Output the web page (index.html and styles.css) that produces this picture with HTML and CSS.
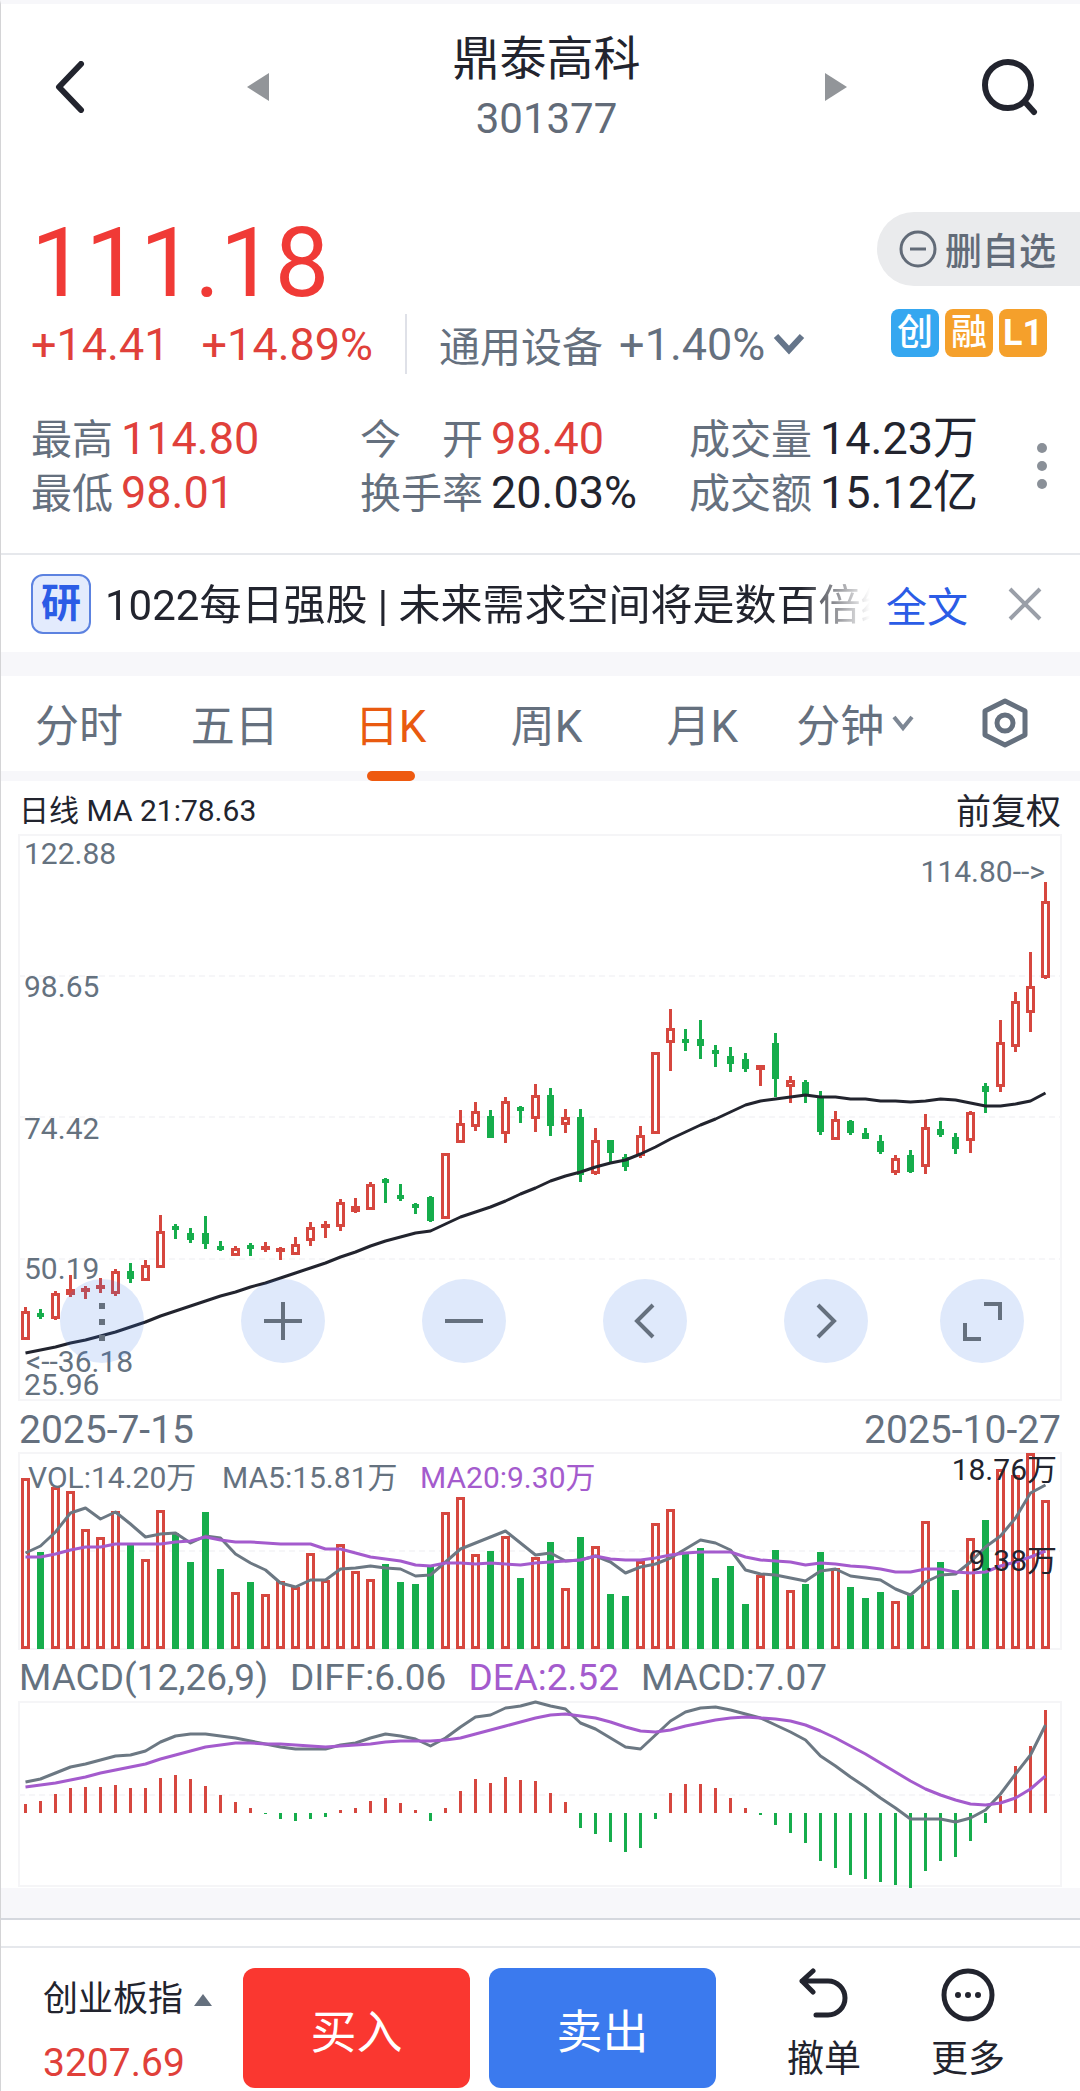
FILE: index.html
```html
<!DOCTYPE html>
<html lang="zh-CN">
<head>
    <meta charset="UTF-8">
    <meta name="viewport" content="width=device-width, initial-scale=1.0">
    <title>鼎泰高科 301377</title>
    <link rel="stylesheet" href="styles.css">
</head>
<body>
<div class="page">
    <header class="topbar">
        <button class="icon-btn back" aria-label="返回">
            <svg width="30" height="52" viewBox="0 0 30 52"><path d="M26 3L4 26L26 49" fill="none" stroke="#22242e" stroke-width="6" stroke-linecap="round" stroke-linejoin="round"/></svg>
        </button>
        <div class="switcher">
            <button class="icon-btn" aria-label="上一只">
                <svg width="22" height="28" viewBox="0 0 22 28"><path d="M22 0V28L0 14Z" fill="#929599"/></svg>
            </button>
            <div class="stock">
                <h1>鼎泰高科</h1>
                <span>301377</span>
            </div>
            <button class="icon-btn" aria-label="下一只">
                <svg width="22" height="28" viewBox="0 0 22 28"><path d="M0 0V28L22 14Z" fill="#929599"/></svg>
            </button>
        </div>
        <button class="icon-btn search" aria-label="搜索">
            <svg width="56" height="58" viewBox="0 0 56 58" fill="none" stroke="#22242e" stroke-width="6" stroke-linecap="round"><circle cx="26" cy="27" r="23"/><path d="M43 44L52 54"/></svg>
        </button>
    </header>

    <section class="quote">
        <div class="quote-main">
            <div class="price">111.18</div>
            <div class="change">
                <span>+14.41</span>
                <span>+14.89%</span>
                <button class="sector">
                    <span class="sector-name">通用设备</span>
                    <span>+1.40%</span>
                    <svg width="32" height="24" viewBox="0 0 32 24"><path d="M3 4L16 18L29 4" fill="none" stroke="#65758a" stroke-width="6"/></svg>
                </button>
            </div>
        </div>
        <div class="quote-side">
            <button class="unfollow">
                <svg width="38" height="38" viewBox="0 0 38 38" fill="none" stroke="#626b78" stroke-width="3"><circle cx="19" cy="19" r="17"/><path d="M11 19H27"/></svg>
                删自选
            </button>
            <div class="tags">
                <span class="tag tag-blue">创</span>
                <span class="tag">融</span>
                <span class="tag tag-level">L1</span>
            </div>
        </div>
    </section>

    <section class="stats">
        <dl>
            <div><dt>最高</dt><dd class="up">114.80</dd></div>
            <div><dt>今　开</dt><dd class="up">98.40</dd></div>
            <div><dt>成交量</dt><dd>14.23万</dd></div>
            <div><dt>最低</dt><dd class="up">98.01</dd></div>
            <div><dt>换手率</dt><dd>20.03%</dd></div>
            <div><dt>成交额</dt><dd>15.12亿</dd></div>
        </dl>
        <button class="icon-btn more-stats" aria-label="更多指标">
            <svg width="10" height="46" viewBox="0 0 10 46" fill="#8a9098"><circle cx="5" cy="5" r="5"/><circle cx="5" cy="23" r="5"/><circle cx="5" cy="41" r="5"/></svg>
        </button>
    </section>

    <section class="news">
        <span class="news-badge">研</span>
        <p class="news-text">1022每日强股 | 未来需求空间将是数百倍级</p>
        <a class="news-link" href="#">全文</a>
        <button class="icon-btn close" aria-label="关闭">
            <svg width="34" height="34" viewBox="0 0 34 34"><path d="M2 2L32 32M32 2L2 32" stroke="#9a9fa8" stroke-width="4"/></svg>
        </button>
    </section>

    <nav class="tabs">
        <button>分时</button>
        <button>五日</button>
        <button class="active">日K</button>
        <button>周K</button>
        <button>月K</button>
        <button>分钟
            <svg width="22" height="18" viewBox="0 0 22 18"><path d="M2 3L11 14L20 3" fill="none" stroke="#7d8794" stroke-width="4"/></svg>
        </button>
        <button aria-label="设置">
            <svg width="48" height="50" viewBox="0 0 48 50" fill="none" stroke="#65707e" stroke-width="5" stroke-linejoin="round"><path d="M24 3L44 13V37L24 47L4 37V13Z"/><circle cx="24" cy="25" r="8"/></svg>
        </button>
    </nav>

    <main class="charts">
        <div class="chart-info">
            <span>日线 MA 21:78.63</span>
            <button>前复权</button>
        </div>

        <div class="kline">
            <svg id="kline" class="chart" viewBox="0 0 1042 565">
                <rect class="frame" width="1042" height="565"/>
                <path class="grid" d="M0 141H1042M0 282H1042M0 424H1042"/>
                <g class="plot"></g>
                <text class="axis" x="5" y="29">122.88</text>
                <text class="axis" x="5" y="162">98.65</text>
                <text class="axis" x="5" y="304">74.42</text>
                <text class="axis" x="5" y="444">50.19</text>
                <text class="axis" x="5" y="560">25.96</text>
                <text class="axis" x="7" y="537">&lt;--36.18</text>
                <text class="axis end" x="1026" y="47">114.80--&gt;</text>
            </svg>
            <div class="tools">
                <button aria-label="菜单"><svg viewBox="0 0 84 84"><path d="M42 24V62" stroke-width="6" stroke-dasharray="6 10"/></svg></button>
                <button aria-label="放大"><svg viewBox="0 0 84 84"><path d="M42 23V61M23 42H61"/></svg></button>
                <button aria-label="缩小"><svg viewBox="0 0 84 84"><path d="M23 42H61"/></svg></button>
                <button aria-label="左移"><svg viewBox="0 0 84 84"><path d="M50 26L34 42L50 58"/></svg></button>
                <button aria-label="右移"><svg viewBox="0 0 84 84"><path d="M34 26L50 42L34 58"/></svg></button>
                <button class="expand" aria-label="全屏"><svg viewBox="0 0 84 84"><path d="M44 25H60V41M25 44V60H41"/></svg></button>
            </div>
        </div>

        <div class="dates">
            <span>2025-7-15</span>
            <span>2025-10-27</span>
        </div>

        <svg id="volume" class="chart" viewBox="0 0 1042 196">
            <rect class="frame" width="1042" height="196"/>
            <path class="grid" d="M0 98H1042"/>
            <g class="plot"></g>
            <text class="axis" x="9" y="35">VOL:14.20万</text>
            <text class="axis" x="203" y="35">MA5:15.81万</text>
            <text class="axis purple" x="401" y="35">MA20:9.30万</text>
            <text class="axis dark end" x="1038" y="27">18.76万</text>
            <text class="axis dark end" x="1038" y="118">9.38万</text>
        </svg>

        <div class="macd-info">
            <span>MACD(12,26,9)</span>
            <span>DIFF:6.06</span>
            <span class="purple">DEA:2.52</span>
            <span>MACD:7.07</span>
        </div>

        <svg id="macd" class="chart" viewBox="0 0 1042 184">
            <rect class="frame" width="1042" height="184"/>
            <path class="grid" d="M0 93H1042"/>
            <g class="plot"></g>
        </svg>
    </main>

    <div class="band"></div>

    <footer class="bottombar">
        <button class="index">
            <span class="index-name">创业板指
                <svg width="18" height="12" viewBox="0 0 18 12"><path d="M9 0L18 12H0Z" fill="#65707e"/></svg>
            </span>
            <span class="index-value">3207.69</span>
        </button>
        <button class="trade buy">买入</button>
        <button class="trade sell">卖出</button>
        <button class="action">
            <svg width="54" height="54" viewBox="0 0 54 54" fill="none" stroke="#22242e" stroke-width="5" stroke-linecap="round" stroke-linejoin="round"><path d="M16 3L5 13L16 24M5 13H31A17 17 0 0 1 31 47H19"/></svg>
            撤单
        </button>
        <button class="action">
            <svg width="54" height="54" viewBox="0 0 54 54"><circle cx="27" cy="27" r="24" fill="none" stroke="#22242e" stroke-width="5"/><g fill="#22242e"><circle cx="17" cy="27" r="3"/><circle cx="27" cy="27" r="3"/><circle cx="37" cy="27" r="3"/></g></svg>
            更多
        </button>
    </footer>
</div>
<script src="script.js"></script>
</body>
</html>
```

FILE: styles.css
```css
* {
    box-sizing: border-box;
}

body {
    margin: 0;
    background: #fff;
    color: #22242e;
    font-family: Roboto, "Noto Sans CJK SC", sans-serif;
}

button {
    padding: 0;
    border: none;
    background: none;
    color: inherit;
    font: inherit;
    cursor: pointer;
}

svg {
    display: block;
    flex: none;
}

.page {
    border-top: 4px solid #f7f7fa;
    border-left: 1px solid #d4d4d6;
}

.icon-btn {
    display: flex;
    align-items: center;
    justify-content: center;
}

/* Cabeçalho */
.topbar {
    display: flex;
    align-items: center;
    justify-content: space-between;
    height: 146px;
    padding: 20px 42px 0 54px;
}

.back {
    width: 56px;
    justify-content: flex-start;
}

.switcher {
    display: flex;
    flex: 0 1 600px;
    align-items: center;
    justify-content: space-between;
}

.stock {
    display: flex;
    flex-direction: column;
    align-items: center;
    padding-top: 2px;
}

.stock h1 {
    margin: 0;
    font-size: 47px;
    font-weight: 400;
    line-height: 62px;
}

.stock span {
    color: #626b78;
    font-size: 42px;
    line-height: 58px;
}

/* Quote */
.quote {
    display: flex;
    justify-content: space-between;
    padding-top: 62px;
}

.quote-main {
    padding-left: 30px;
}

.price {
    color: #f03a36;
    font-size: 97px;
    line-height: 102px;
}

.change {
    display: flex;
    align-items: center;
    gap: 32px;
    height: 60px;
    color: #e0403a;
    font-size: 45px;
    white-space: nowrap;
}

.sector {
    display: flex;
    align-items: center;
    gap: 8px;
    height: 60px;
    padding-left: 32px;
    border-left: 2px solid #dfe1e8;
    color: #65707e;
}

.sector-name {
    margin-right: 8px;
    font-size: 41px;
}

.quote-side {
    display: flex;
    flex-direction: column;
    align-items: flex-end;
    gap: 23px;
}

.unfollow {
    display: flex;
    align-items: center;
    gap: 8px;
    height: 74px;
    padding: 0 24px 0 22px;
    border-radius: 37px 0 0 37px;
    background: #eaebed;
    color: #626b78;
    font-size: 37px;
    font-weight: 500;
}

.tags {
    display: flex;
    gap: 6px;
    padding-right: 33px;
}

.tag {
    width: 48px;
    height: 48px;
    border-radius: 8px;
    background: #f5a02b;
    color: #fff;
    font-size: 36px;
    font-weight: 500;
    line-height: 48px;
    text-align: center;
}

.tag-blue {
    background: #35a7f0;
}

.tag-level {
    font-weight: 700;
}

/* Stats */
.stats {
    display: flex;
    align-items: center;
    padding: 38px 14px 33px 30px;
    border-bottom: 2px solid #e6e8ec;
}

.stats dl {
    display: grid;
    flex: 1;
    grid-template-columns: repeat(3, 1fr);
    margin: 0;
}

.stats dl div {
    display: flex;
    align-items: baseline;
    gap: 8px;
    height: 54px;
    line-height: 54px;
    white-space: nowrap;
}

.stats dt {
    color: #65707e;
    font-size: 41px;
}

.stats dd {
    margin: 0;
    font-size: 45px;
}

.stats .up {
    color: #e0403a;
}

.more-stats {
    width: 48px;
    height: 60px;
}

/* News */
.news {
    display: flex;
    align-items: center;
    height: 97px;
    padding: 0 38px 0 30px;
}

.news-badge {
    flex: none;
    width: 60px;
    height: 60px;
    border: 2px solid #5c82e0;
    border-radius: 12px;
    background: #e3ebfd;
    color: #2b5ce6;
    font-size: 40px;
    font-weight: 700;
    line-height: 56px;
    text-align: center;
}

.news-text {
    flex: 1;
    min-width: 0;
    margin: 0 16px 0 14px;
    padding-top: 4px;
    overflow: hidden;
    font-size: 42px;
    line-height: 60px;
    white-space: nowrap;
    -webkit-mask-image: linear-gradient(to right, #000 91%, transparent);
    mask-image: linear-gradient(to right, #000 91%, transparent);
}

.news-link {
    color: #2b5ce6;
    font-size: 41px;
    text-decoration: none;
}

.close {
    margin-left: 40px;
}

/* Tabs */
.tabs {
    display: grid;
    grid-template-columns: repeat(5, 26fr) repeat(2, 25fr);
    height: 129px;
    border-top: 24px solid #f7f7fa;
    border-bottom: 10px solid #f7f7fa;
    color: #65707e;
    font-size: 44px;
}

.tabs button {
    position: relative;
    display: flex;
    align-items: center;
    justify-content: center;
    gap: 8px;
    height: 95px;
    padding-bottom: 2px;
}

.tabs .active {
    color: #e95a10;
}

.tabs .active::after {
    content: "";
    position: absolute;
    bottom: -10px;
    width: 48px;
    height: 10px;
    border-radius: 5px;
    background: #ee5a10;
}

/* Charts */
.charts {
    padding: 0 19px 2px 18px;
}

.chart-info {
    display: flex;
    align-items: center;
    justify-content: space-between;
    height: 54px;
    font-size: 30px;
}

.chart-info button {
    font-size: 35px;
}

.chart {
    width: 100%;
    height: auto;
    overflow: visible;
}

.kline {
    position: relative;
}

.tools {
    position: absolute;
    right: 37px;
    bottom: 37px;
    left: 41px;
    display: flex;
}

.tools button {
    flex: none;
    width: 84px;
    height: 84px;
    margin-right: 97px;
    border-radius: 50%;
    background: rgba(55, 120, 230, 0.16);
}

.tools button:nth-last-child(2) {
    margin-right: auto;
}

.tools .expand {
    margin-right: 0;
}

.tools svg {
    fill: none;
    stroke: #65707e;
    stroke-width: 4;
}

.dates {
    display: flex;
    align-items: center;
    justify-content: space-between;
    height: 53px;
    padding-top: 6px;
    color: #65707e;
    font-size: 39px;
}

.macd-info {
    display: flex;
    align-items: center;
    gap: 22px;
    height: 53px;
    padding-top: 4px;
    color: #65727f;
    font-size: 37px;
    white-space: nowrap;
}

.frame {
    fill: none;
    stroke: #f5f5f7;
    stroke-width: 2;
}

.grid {
    stroke: #f6f6f8;
    stroke-width: 2;
    stroke-dasharray: 6 4;
}

.axis {
    fill: #65727f;
    font-size: 30px;
}

.end {
    text-anchor: end;
}

.dark {
    fill: #22242e;
}

.purple {
    color: #a45bcd;
    fill: #a45bcd;
}

.rise {
    fill: #fff;
    stroke: #d6473f;
    stroke-width: 3;
}

.fall {
    fill: #16ad4c;
    stroke: #16ad4c;
    stroke-width: 3;
}

.line {
    fill: none;
    stroke: #22242e;
    stroke-width: 3;
    stroke-linejoin: round;
}

.line-gray {
    stroke: #6c7883;
}

.line-purple {
    stroke: #a45bcd;
}

/* Bottom */
.band {
    height: 60px;
    border-top: 30px solid #f7f7fa;
    border-bottom: 2px solid #e6e8ec;
    box-shadow: inset 0 2px 0 #d5d8de;
}

.bottombar {
    display: flex;
    align-items: flex-start;
    height: 143px;
    padding: 20px 40px 0 42px;
}

.index {
    display: flex;
    flex-direction: column;
    align-items: flex-start;
    width: 200px;
    padding-top: 2px;
    white-space: nowrap;
}

.index-name {
    display: flex;
    align-items: center;
    gap: 11px;
    font-size: 35px;
    line-height: 60px;
}

.index-value {
    color: #e0403a;
    font-size: 39px;
    line-height: 66px;
}

.trade {
    flex: 1;
    height: 120px;
    border-radius: 12px;
    color: #fff;
    font-size: 46px;
}

.buy {
    margin-right: 19px;
    background: #fa3730;
}

.sell {
    background: #3b7aee;
}

.action {
    display: flex;
    flex-direction: column;
    align-items: center;
    gap: 12px;
    width: 144px;
    font-size: 37px;
    line-height: 52px;
}

.sell + .action {
    margin-left: 36px;
}
```

FILE: script.js
```js
const PASSO = 15;
const INICIO = 6.5;

// [cor, máxima, topo do corpo, base do corpo, mínima]
const candles = [
    ['r', 472, 476, 505, 505], ['g', 474, 478, 482, 484], ['r', 456, 458, 484, 485],
    ['r', 440, 454, 460, 462], ['r', 451, 453, 455, 464], ['r', 443, 450, 453, 458],
    ['r', 434, 436, 459, 461], ['g', 428, 436, 444, 448], ['r', 425, 430, 446, 446],
    ['r', 380, 396, 433, 433], ['g', 389, 391, 394, 404], ['g', 393, 398, 405, 408],
    ['g', 381, 398, 409, 414], ['g', 406, 411, 415, 416], ['r', 411, 413, 421, 421],
    ['g', 408, 410, 413, 421], ['r', 407, 411, 414, 417], ['r', 412, 413, 416, 425],
    ['r', 402, 409, 420, 420], ['r', 387, 392, 406, 411], ['r', 386, 389, 393, 403],
    ['r', 364, 367, 392, 396], ['r', 363, 371, 377, 378], ['r', 347, 349, 375, 375],
    ['g', 343, 344, 348, 368], ['g', 349, 360, 364, 366], ['g', 368, 369, 371, 379],
    ['g', 361, 362, 386, 387], ['r', 318, 318, 384, 384], ['r', 275, 288, 308, 308],
    ['r', 267, 276, 292, 296], ['g', 275, 281, 303, 303], ['r', 262, 266, 299, 308],
    ['g', 271, 272, 276, 288], ['r', 249, 260, 284, 297], ['g', 253, 260, 291, 301],
    ['r', 274, 282, 290, 298], ['g', 274, 282, 340, 347], ['r', 293, 305, 339, 340],
    ['g', 305, 305, 318, 327], ['g', 319, 322, 332, 336], ['r', 291, 300, 321, 323],
    ['r', 217, 217, 299, 299], ['r', 174, 193, 208, 236], ['g', 194, 204, 206, 216],
    ['g', 185, 204, 211, 224], ['g', 210, 215, 218, 232], ['g', 212, 221, 229, 237],
    ['g', 218, 224, 234, 237], ['r', 230, 230, 235, 251], ['g', 198, 208, 244, 262],
    ['r', 241, 245, 252, 268], ['g', 245, 247, 259, 268], ['g', 256, 262, 297, 300],
    ['r', 276, 284, 305, 305], ['g', 285, 286, 298, 300], ['g', 293, 298, 304, 304],
    ['g', 300, 306, 317, 319], ['r', 320, 323, 338, 340], ['g', 315, 320, 337, 338],
    ['r', 279, 292, 332, 339], ['g', 286, 294, 300, 302], ['g', 298, 302, 314, 319],
    ['r', 276, 277, 306, 318], ['g', 248, 251, 257, 278], ['r', 185, 207, 252, 257],
    ['r', 157, 166, 212, 217], ['r', 117, 151, 178, 197], ['r', 47, 66, 143, 144]
];

const ma21 = [518, 515, 512, 508, 505, 501, 497, 492, 487, 481, 476, 471, 466, 461, 457, 452, 448,
    443, 438, 433, 428, 422, 417, 411, 406, 402, 398, 396, 389, 382, 377, 372, 366, 359, 353, 346,
    341, 337, 332, 328, 325, 319, 312, 304, 297, 290, 284, 277, 270, 266, 264, 262, 260, 262, 262,
    264, 264, 266, 266, 267, 266, 264, 265, 268, 271, 271, 269, 266, 258];

const volume = [25, 99, 34, 38, 76, 84, 58, 92, 106, 57, 80, 109, 59, 116, 139, 129, 141, 128, 134,
    100, 127, 91, 118, 126, 111, 129, 131, 113, 59, 44, 101, 98, 83, 125, 104, 89, 135, 84, 93, 141,
    143, 108, 70, 56, 101, 95, 125, 113, 151, 122, 97, 137, 131, 99, 115, 134, 145, 139, 148, 142,
    68, 109, 137, 85, 67, 16, 22, 0, 47];

const volMa5 = [100, 93, 79, 60, 55, 66, 59, 71, 84, 81, 80, 90, 83, 85, 101, 110, 117, 130, 134,
    127, 127, 116, 115, 113, 115, 116, 123, 122, 109, 96, 90, 84, 78, 90, 102, 100, 108, 107, 103,
    109, 120, 114, 111, 105, 96, 87, 90, 97, 117, 121, 122, 125, 128, 118, 116, 123, 125, 127, 136,
    142, 129, 122, 121, 109, 94, 83, 65, 40, 32];

const volMa20 = [104, 104, 101, 97, 94, 94, 91, 91, 91, 91, 89, 88, 84, 87, 89, 89, 90, 91, 91, 91,
    96, 96, 100, 104, 106, 108, 112, 113, 110, 110, 111, 110, 111, 112, 110, 109, 108, 107, 103,
    106, 107, 107, 105, 102, 100, 99, 99, 99, 104, 107, 108, 109, 112, 110, 111, 113, 114, 116, 119,
    119, 116, 116, 119, 120, 119, 113, 109, 104, 98];

const macd = [102, 99, 92, 86, 85, 85, 83, 86, 86, 76, 73, 77, 84, 93, 100, 106, 112, 117, 119, 117,
    115, 108, 106, 99, 96, 101, 108, 119, 106, 89, 77, 81, 75, 78, 79, 91, 100, 126, 132, 140, 150,
    146, 117, 91, 82, 82, 86, 96, 106, 113, 123, 131, 141, 159, 166, 173, 177, 180, 183, 186, 169,
    159, 155, 139, 121, 94, 64, 44, 8];

const diff = [80, 77, 71, 65, 62, 58, 54, 53, 49, 40, 34, 32, 32, 34, 36, 39, 42, 45, 47, 47, 47, 43,
    41, 36, 32, 34, 37, 44, 36, 25, 15, 13, 6, 4, 0, 4, 7, 21, 27, 36, 45, 47, 33, 19, 10, 6, 5, 8,
    12, 16, 23, 30, 38, 54, 64, 75, 85, 96, 106, 117, 117, 117, 120, 116, 108, 92, 72, 53, 23];

const dea = [85, 83, 81, 78, 75, 71, 68, 65, 62, 57, 53, 49, 45, 43, 41, 41, 42, 42, 43, 44, 45, 44,
    43, 42, 40, 39, 39, 39, 38, 36, 32, 28, 24, 20, 16, 13, 12, 14, 16, 20, 25, 29, 30, 28, 24, 21,
    18, 16, 15, 16, 17, 19, 23, 29, 36, 44, 52, 61, 70, 79, 87, 93, 98, 102, 103, 101, 96, 87, 74];

function posX(i) {
    return INICIO + i * PASSO;
}

function linha(valores, classe) {
    const pontos = valores.map((y, i) => `${posX(i)},${y}`).join(' ');
    return `<polyline class="line ${classe}" points="${pontos}"/>`;
}

function barra(i, topo, base, sobe) {
    const meia = sobe ? 3 : 2;
    const altura = Math.max(base - topo - 3, 1);
    return `<rect class="${sobe ? 'rise' : 'fall'}" x="${posX(i) - meia}" y="${topo + 1.5}" width="${meia * 2}" height="${altura}"/>`;
}

function desenhar(id, conteudo) {
    document.querySelector(`#${id} .plot`).innerHTML = conteudo;
}

desenhar('kline', candles.map(([cor, max, topo, base, min], i) => {
    const sobe = cor === 'r';
    const pavio = `<path class="${sobe ? 'rise' : 'fall'}" d="M${posX(i)} ${max}V${min}"/>`;
    return pavio + barra(i, topo, base, sobe);
}).join('') + linha(ma21, ''));

desenhar('volume', volume.map((topo, i) => barra(i, topo, 196, candles[i][0] === 'r')).join('')
    + linha(volMa5, 'line-gray') + linha(volMa20, 'line-purple'));

// Linha zero do MACD em y = 111
desenhar('macd', macd.map((y, i) =>
    `<path class="${y < 111 ? 'rise' : 'fall'}" d="M${posX(i)} 111V${y}"/>`
).join('') + linha(diff, 'line-gray') + linha(dea, 'line-purple'));
```
